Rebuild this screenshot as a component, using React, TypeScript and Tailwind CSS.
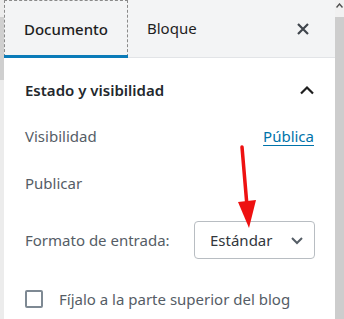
import React from "react";

export default function App() {
  return (
    <div
      className="relative flex h-[319px] w-[344px] overflow-hidden bg-white text-[#32373c]"
      style={{ fontFamily: '"Noto Sans", "Open Sans", sans-serif' }}
    >
      {/* left strip */}
      <div className="flex w-[4px] flex-col bg-[#ececec]">
        <div className="h-[17px]" />
        <div className="h-[63px] bg-[#cfcfcf]" />
      </div>
      {/* panel */}
      <div className="flex w-[331px] flex-col">
        <div className="flex h-[58px] items-stretch border-b border-[#e2e4e7] bg-[#f3f4f5]">
          <div className="relative flex w-[124px] items-center justify-center border-x border-t border-dashed border-[#8a8a8a] text-[15px] font-medium text-[#1e1e1e]">
            <span className="mt-[1px]">Documento</span>
            <div className="absolute bottom-[-1px] left-[-1px] right-[-1px] h-[3px] bg-[#0a7bb8]" />
          </div>
          <div className="flex items-center pl-[19px] text-[15px] text-[#1e1e1e]">
            Bloque
          </div>
          <div className="flex-1" />
          <div className="flex items-center pr-[25px]">
            <svg width="14" height="14" viewBox="0 0 14 14">
              <path d="M2 2 L12 12 M12 2 L2 12" stroke="#40464d" strokeWidth="2.2" />
            </svg>
          </div>
        </div>
        <div className="flex flex-col px-[21px]">
          <div className="flex h-[64px] items-center justify-between">
            <span className="text-[15px] font-semibold text-[#23282d]">Estado y visibilidad</span>
            <svg width="16" height="10" viewBox="0 0 16 10" className="mr-[-1px]">
              <path d="M2 8.5 L8 2.5 L14 8.5" stroke="#1e1e1e" strokeWidth="2.2" fill="none" />
            </svg>
          </div>
          <div className="flex h-[28px] items-center justify-between text-[15px]">
            <span className="text-[#555d66]">Visibilidad</span>
            <span className="text-[#0073aa] underline decoration-[1px] underline-offset-[3px]">Pública</span>
          </div>
          <div className="mt-[19px] flex h-[28px] items-center text-[15px] text-[#555d66]">Publicar</div>
          <div className="mt-[24px] flex h-[38px] items-center justify-between text-[15px]">
            <span className="text-[#555d66]">Formato de entrada:</span>
            <div className="mr-[-1px] flex h-[38px] w-[121px] items-center justify-between rounded-[4px] border border-[#b8bdc2] pl-[15px] pr-[10px] text-[#32373c]">
              <span>Estándar</span>
              <svg width="14" height="10" viewBox="0 0 14 10">
                <path d="M2 3 L7 8 L12 3" stroke="#555d66" strokeWidth="2" fill="none" />
              </svg>
            </div>
          </div>
          <div className="mt-[29px] flex items-center gap-[16px] text-[15px] text-[#555d66]">
            <div className="h-[18px] w-[18px] rounded-[2px] border-2 border-[#7e8993]" />
            <span>Fíjalo a la parte superior del blog</span>
          </div>
        </div>
      </div>
      {/* right scrollbar */}
      <div className="flex w-[9px] flex-col bg-[#f1f1f1]">
        <div className="flex h-[17px] items-start justify-center pt-[3px]">
          <svg width="7" height="5" viewBox="0 0 7 5">
            <path d="M0.5 4.5 L3.5 1 L6.5 4.5" stroke="#505050" strokeWidth="1.4" fill="none" />
          </svg>
        </div>
        <div className="flex-1 bg-[#cdcdcd]" />
      </div>
      {/* red arrow annotation */}
      <svg className="absolute left-[230px] top-[144px]" width="30" height="90" viewBox="0 0 30 90">
        <path d="M12 3 L17 62" stroke="#ee1111" strokeWidth="3.5" strokeLinecap="round" />
        <path d="M8 58 L26 56 L19 84 Z" fill="#ee1111" />
      </svg>
    </div>
  );
}
